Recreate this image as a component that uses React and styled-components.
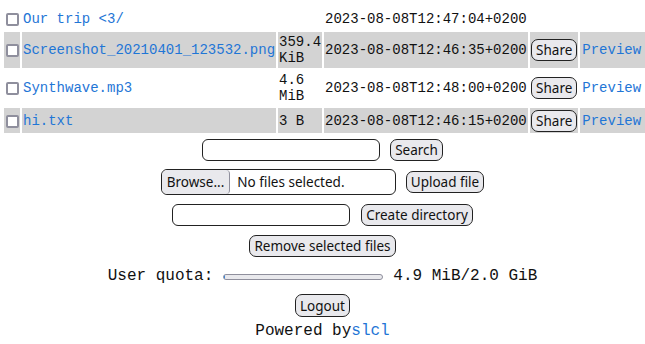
import React from 'react';
import styled, { createGlobalStyle } from 'styled-components';

const files = [
    { name: 'Our trip <3/', size: '', date: '2023-08-08T12:47:04+0200', dir: true },
    { name: 'Screenshot_20210401_123532.png', size: ['359.4', 'KiB'], date: '2023-08-08T12:46:35+0200' },
    { name: 'Synthwave.mp3', size: ['4.6', 'MiB'], date: '2023-08-08T12:48:00+0200' },
    { name: 'hi.txt', size: ['3 B'], date: '2023-08-08T12:46:15+0200' },
];

const rowHeights = [22, 36, 36, 25];

function App() {
    return (
        <Page>
            <GlobalStyle />
            <FileTable>
                <tbody>
                    {files.map((f, i) => (
                        <Row key={f.name} $shaded={i % 2 === 1} $h={rowHeights[i]}>
                            <Cell $w={16}><Check type="checkbox" /></Cell>
                            <Cell $w={254} $pad={1}><FileLink href="#">{f.name}</FileLink></Cell>
                            <Cell $w={44} $pad={1}>
                                {f.size && f.size.map((s, k) => <div key={k}>{s}</div>)}
                            </Cell>
                            <Cell $w={204} $pad={1}>{f.date}</Cell>
                            <Cell $w={47} $pad={1}>{!f.dir && <SmallButton>Share</SmallButton>}</Cell>
                            <Cell $w={70} $pad={2}>{!f.dir && <FileLink href="#">Preview</FileLink>}</Cell>
                        </Row>
                    ))}
                </tbody>
            </FileTable>

            <FormRow $top={4}>
                <TextInput $w={178} />
                <SmallButton>Search</SmallButton>
            </FormRow>

            <FormRow $top={8}>
                <FilePicker>
                    <Browse>Browse...</Browse>
                    <FileLabel>No files selected.</FileLabel>
                </FilePicker>
                <SmallButton>Upload file</SmallButton>
            </FormRow>

            <FormRow $top={9} $gap={11}>
                <TextInput $w={178} />
                <SmallButton>Create directory</SmallButton>
            </FormRow>

            <FormRow $top={9}>
                <SmallButton>Remove selected files</SmallButton>
            </FormRow>

            <QuotaRow>
                <span>User quota:</span>
                <QuotaBar><QuotaFill style={{ width: '0.25%' }} /></QuotaBar>
                <span>4.9 MiB/2.0 GiB</span>
            </QuotaRow>

            <FormRow $top={8}>
                <SmallButton $h={23}>Logout</SmallButton>
            </FormRow>

            <Footer>Powered by<FileLink href="#">slcl</FileLink></Footer>
        </Page>
    );
}

const GlobalStyle = createGlobalStyle`
    html, body {
        margin: 0;
        padding: 0;
        background: #fff;
        overflow: hidden;
    }
    body {
        font-family: "Liberation Mono", "DejaVu Sans Mono", monospace;
        font-size: 16px;
        color: #111;
    }
`;

const Page = styled.div`
    width: 645px;
    height: 344px;
    display: flex;
    flex-direction: column;
    align-items: center;
`;

const FileTable = styled.table`
    align-self: flex-start;
    margin: 6px 0 0 2px;
    border-spacing: 2px;
    font-size: 14px;
    line-height: 16px;
    table-layout: fixed;
`;

const Row = styled.tr`
    height: ${p => p.$h}px;
    td {
        background: ${p => (p.$shaded ? '#d3d3d3' : 'transparent')};
    }
`;

const Cell = styled.td`
    box-sizing: border-box;
    width: ${p => p.$w}px;
    min-width: ${p => p.$w}px;
    padding: 0 ${p => p.$pad || 0}px;
    vertical-align: middle;
    white-space: nowrap;
`;

const Check = styled.input`
    appearance: none;
    display: block;
    box-sizing: border-box;
    width: 13px;
    height: 13px;
    margin: 1px 0 0 2px;
    border: 2px solid #8f8f9d;
    border-radius: 2px;
    background: #fff;
`;

const FileLink = styled.a`
    color: #1f76d6;
    text-decoration: none;
`;

const SmallButton = styled.button`
    box-sizing: border-box;
    height: ${p => p.$h || 22}px;
    font-family: "Noto Sans", "Open Sans", sans-serif;
    font-size: 13.5px;
    line-height: 18px;
    color: #111;
    background: #e9e9ed;
    border: 1px solid #222;
    border-radius: 7px;
    padding: 0 4px;
    margin: 0;
    cursor: pointer;
`;

const FormRow = styled.div`
    display: flex;
    align-items: center;
    justify-content: center;
    gap: ${p => p.$gap || 10}px;
    margin-top: ${p => p.$top}px;
`;

const TextInput = styled.input`
    box-sizing: border-box;
    width: ${p => p.$w}px;
    height: 22px;
    margin: 0;
    border: 1px solid #222;
    border-radius: 6px;
    background: #fff;
`;

const FilePicker = styled.div`
    box-sizing: border-box;
    width: 235px;
    height: 26px;
    display: flex;
    align-items: stretch;
    border: 1px solid #222;
    border-radius: 6px;
    overflow: hidden;
    font-family: "Noto Sans", "Open Sans", sans-serif;
    font-size: 13.5px;
`;

const Browse = styled.span`
    display: flex;
    align-items: center;
    padding: 0 5px;
    background: #e9e9ed;
    border-right: 1px solid #8f8f9d;
    border-radius: 5px 4px 4px 5px;
`;

const FileLabel = styled.span`
    display: flex;
    align-items: center;
    padding-left: 7px;
`;

const QuotaRow = styled.div`
    display: flex;
    align-items: center;
    gap: 10px;
    margin-top: 10px;
    height: 19px;
    line-height: 19px;
`;

const QuotaBar = styled.div`
    box-sizing: border-box;
    width: 160px;
    height: 6px;
    margin-top: 0;
    border: 1px solid #8f8f9d;
    border-radius: 3px;
    background: #e9e9ed;
    overflow: hidden;
`;

const QuotaFill = styled.div`
    height: 100%;
    background: #1f76d6;
`;

const Footer = styled.div`
    margin-top: 5px;
    line-height: 19px;
`;

export default App;
